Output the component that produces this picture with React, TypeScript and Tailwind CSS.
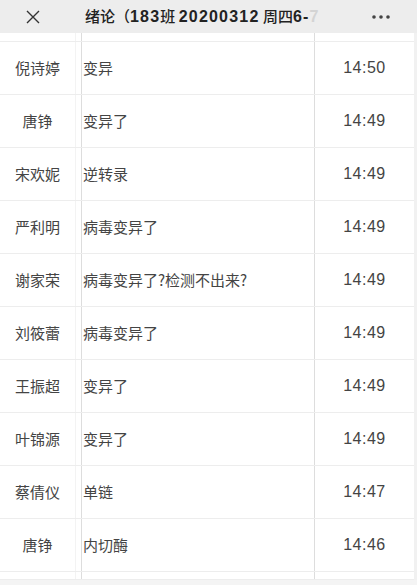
const rows = [
  { name: '倪诗婷', text: '变异', time: '14:50' },
  { name: '唐铮', text: '变异了', time: '14:49' },
  { name: '宋欢妮', text: '逆转录', time: '14:49' },
  { name: '严利明', text: '病毒变异了', time: '14:49' },
  { name: '谢家荣', text: '病毒变异了?检测不出来?', time: '14:49' },
  { name: '刘筱蕾', text: '病毒变异了', time: '14:49' },
  { name: '王振超', text: '变异了', time: '14:49' },
  { name: '叶锦源', text: '变异了', time: '14:49' },
  { name: '蔡倩仪', text: '单链', time: '14:47' },
  { name: '唐铮', text: '内切酶', time: '14:46' },
];

const num = { fontFamily: '"Liberation Sans", sans-serif', letterSpacing: '1.2px' };

function Row({ name = '', text = '', time = '', h = 'h-[53px]' }: { name?: string; text?: string; time?: string; h?: string }) {
  return (
    <div className={`flex ${h} border-b border-[#ededed] items-center`}>
      <div className="flex h-full w-[82px] shrink-0 border-r border-[#dddddd]">
        <div className="flex h-full w-[76px] items-center justify-center border-r border-[#f3f3f3] text-[15px] text-[#444]">
          {name}
        </div>
      </div>
      <div className="flex h-full flex-1 items-center pl-[1px] text-[15px] text-[#444]">{text}</div>
      <div
        className="flex h-full w-[100px] shrink-0 items-center justify-center border-l border-[#dddddd] text-[16px] text-[#444]"
        style={{ fontFamily: '"Liberation Sans", sans-serif', letterSpacing: '0.5px' }}
      >
        {time}
      </div>
    </div>
  );
}

export default function App() {
  return (
    <div
      className="relative h-[585px] w-[417px] overflow-hidden bg-white"
      style={{ fontFamily: '"Noto Sans CJK SC", sans-serif' }}
    >
      <div className="flex h-[33px] items-center bg-[#ededed]">
        <div className="flex w-[66px] justify-center">
          <svg width="16" height="16" viewBox="0 0 16 16" fill="none" stroke="#333" strokeWidth="1.4">
            <path d="M2 2L14 14M14 2L2 14" />
          </svg>
        </div>
        <div className="w-[276px] whitespace-nowrap pl-[19px] text-[15px] font-medium text-[#222]">
          绪论（<span style={num} className="text-[16px] font-bold">183</span>班{' '}
          <span style={num} className="text-[16px] font-bold">20200312</span> 周四
          <span style={num} className="text-[16px] font-bold">6-</span>
          <span style={num} className="text-[16px] font-bold text-[#d4d4d4]">7</span>
        </div>
        <div className="flex flex-1 justify-center pl-[2px]">
          <svg width="20" height="6" viewBox="0 0 20 6" fill="#444">
            <circle cx="3" cy="3" r="1.8" />
            <circle cx="10" cy="3" r="1.8" />
            <circle cx="17" cy="3" r="1.8" />
          </svg>
        </div>
      </div>
      <div className="border-r-[3px] border-[#f1f1f1]">
        <Row h="h-[9px]" />
        {rows.map((r, i) => (
          <Row key={i} {...r} />
        ))}
        <Row h="h-[8px]" />
      </div>
      <div className="h-[10px] bg-[#f4f4f4]" />
    </div>
  );
}
